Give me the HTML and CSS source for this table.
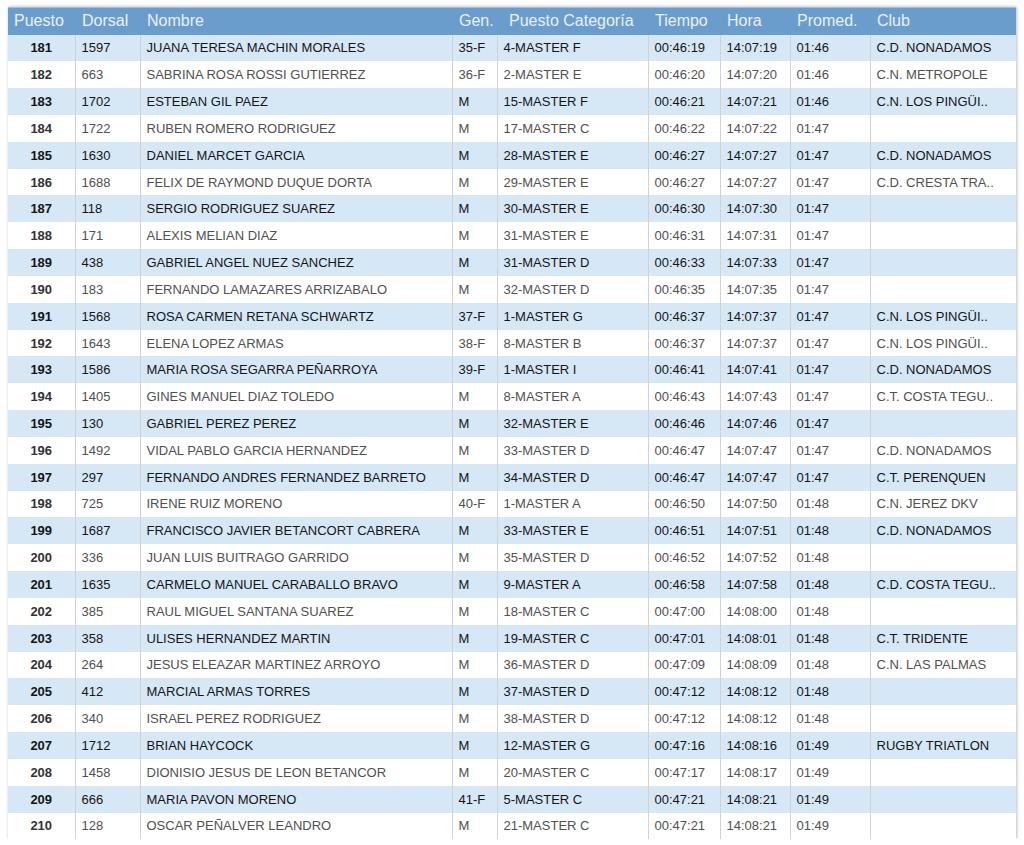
FILE: index.html
```html
<!DOCTYPE html>
<html lang="es">
<head>
<meta charset="utf-8">
<title>Clasificación</title>
<link rel="stylesheet" href="styles.css">
</head>
<body>
<table class="results">
<colgroup>
<col class="c-pos"><col class="c-dor"><col class="c-nom"><col class="c-gen"><col class="c-cat"><col class="c-tie"><col class="c-hor"><col class="c-pro"><col class="c-club">
</colgroup>
<thead>
<tr><th class="h-pos">Puesto</th><th>Dorsal</th><th>Nombre</th><th>Gen.</th><th class="h-cat">Puesto Categoría</th><th>Tiempo</th><th>Hora</th><th>Promed.</th><th>Club</th></tr>
</thead>
<tbody>
<tr><td class="pos">181</td><td>1597</td><td>JUANA TERESA MACHIN MORALES</td><td>35-F</td><td>4-MASTER F</td><td>00:46:19</td><td>14:07:19</td><td>01:46</td><td>C.D. NONADAMOS</td></tr>
<tr><td class="pos">182</td><td>663</td><td>SABRINA ROSA ROSSI GUTIERREZ</td><td>36-F</td><td>2-MASTER E</td><td>00:46:20</td><td>14:07:20</td><td>01:46</td><td>C.N. METROPOLE</td></tr>
<tr><td class="pos">183</td><td>1702</td><td>ESTEBAN GIL PAEZ</td><td>M</td><td>15-MASTER F</td><td>00:46:21</td><td>14:07:21</td><td>01:46</td><td>C.N. LOS PINGÜI..</td></tr>
<tr><td class="pos">184</td><td>1722</td><td>RUBEN ROMERO RODRIGUEZ</td><td>M</td><td>17-MASTER C</td><td>00:46:22</td><td>14:07:22</td><td>01:47</td><td></td></tr>
<tr><td class="pos">185</td><td>1630</td><td>DANIEL MARCET GARCIA</td><td>M</td><td>28-MASTER E</td><td>00:46:27</td><td>14:07:27</td><td>01:47</td><td>C.D. NONADAMOS</td></tr>
<tr><td class="pos">186</td><td>1688</td><td>FELIX DE RAYMOND DUQUE DORTA</td><td>M</td><td>29-MASTER E</td><td>00:46:27</td><td>14:07:27</td><td>01:47</td><td>C.D. CRESTA TRA..</td></tr>
<tr><td class="pos">187</td><td>118</td><td>SERGIO RODRIGUEZ SUAREZ</td><td>M</td><td>30-MASTER E</td><td>00:46:30</td><td>14:07:30</td><td>01:47</td><td></td></tr>
<tr><td class="pos">188</td><td>171</td><td>ALEXIS MELIAN DIAZ</td><td>M</td><td>31-MASTER E</td><td>00:46:31</td><td>14:07:31</td><td>01:47</td><td></td></tr>
<tr><td class="pos">189</td><td>438</td><td>GABRIEL ANGEL NUEZ SANCHEZ</td><td>M</td><td>31-MASTER D</td><td>00:46:33</td><td>14:07:33</td><td>01:47</td><td></td></tr>
<tr><td class="pos">190</td><td>183</td><td>FERNANDO LAMAZARES ARRIZABALO</td><td>M</td><td>32-MASTER D</td><td>00:46:35</td><td>14:07:35</td><td>01:47</td><td></td></tr>
<tr><td class="pos">191</td><td>1568</td><td>ROSA CARMEN RETANA SCHWARTZ</td><td>37-F</td><td>1-MASTER G</td><td>00:46:37</td><td>14:07:37</td><td>01:47</td><td>C.N. LOS PINGÜI..</td></tr>
<tr><td class="pos">192</td><td>1643</td><td>ELENA LOPEZ ARMAS</td><td>38-F</td><td>8-MASTER B</td><td>00:46:37</td><td>14:07:37</td><td>01:47</td><td>C.N. LOS PINGÜI..</td></tr>
<tr><td class="pos">193</td><td>1586</td><td>MARIA ROSA SEGARRA PEÑARROYA</td><td>39-F</td><td>1-MASTER I</td><td>00:46:41</td><td>14:07:41</td><td>01:47</td><td>C.D. NONADAMOS</td></tr>
<tr><td class="pos">194</td><td>1405</td><td>GINES MANUEL DIAZ TOLEDO</td><td>M</td><td>8-MASTER A</td><td>00:46:43</td><td>14:07:43</td><td>01:47</td><td>C.T. COSTA TEGU..</td></tr>
<tr><td class="pos">195</td><td>130</td><td>GABRIEL PEREZ PEREZ</td><td>M</td><td>32-MASTER E</td><td>00:46:46</td><td>14:07:46</td><td>01:47</td><td></td></tr>
<tr><td class="pos">196</td><td>1492</td><td>VIDAL PABLO GARCIA HERNANDEZ</td><td>M</td><td>33-MASTER D</td><td>00:46:47</td><td>14:07:47</td><td>01:47</td><td>C.D. NONADAMOS</td></tr>
<tr><td class="pos">197</td><td>297</td><td>FERNANDO ANDRES FERNANDEZ BARRETO</td><td>M</td><td>34-MASTER D</td><td>00:46:47</td><td>14:07:47</td><td>01:47</td><td>C.T. PERENQUEN</td></tr>
<tr><td class="pos">198</td><td>725</td><td>IRENE RUIZ MORENO</td><td>40-F</td><td>1-MASTER A</td><td>00:46:50</td><td>14:07:50</td><td>01:48</td><td>C.N. JEREZ DKV</td></tr>
<tr><td class="pos">199</td><td>1687</td><td>FRANCISCO JAVIER BETANCORT CABRERA</td><td>M</td><td>33-MASTER E</td><td>00:46:51</td><td>14:07:51</td><td>01:48</td><td>C.D. NONADAMOS</td></tr>
<tr><td class="pos">200</td><td>336</td><td>JUAN LUIS BUITRAGO GARRIDO</td><td>M</td><td>35-MASTER D</td><td>00:46:52</td><td>14:07:52</td><td>01:48</td><td></td></tr>
<tr><td class="pos">201</td><td>1635</td><td>CARMELO MANUEL CARABALLO BRAVO</td><td>M</td><td>9-MASTER A</td><td>00:46:58</td><td>14:07:58</td><td>01:48</td><td>C.D. COSTA TEGU..</td></tr>
<tr><td class="pos">202</td><td>385</td><td>RAUL MIGUEL SANTANA SUAREZ</td><td>M</td><td>18-MASTER C</td><td>00:47:00</td><td>14:08:00</td><td>01:48</td><td></td></tr>
<tr><td class="pos">203</td><td>358</td><td>ULISES HERNANDEZ MARTIN</td><td>M</td><td>19-MASTER C</td><td>00:47:01</td><td>14:08:01</td><td>01:48</td><td>C.T. TRIDENTE</td></tr>
<tr><td class="pos">204</td><td>264</td><td>JESUS ELEAZAR MARTINEZ ARROYO</td><td>M</td><td>36-MASTER D</td><td>00:47:09</td><td>14:08:09</td><td>01:48</td><td>C.N. LAS PALMAS</td></tr>
<tr><td class="pos">205</td><td>412</td><td>MARCIAL ARMAS TORRES</td><td>M</td><td>37-MASTER D</td><td>00:47:12</td><td>14:08:12</td><td>01:48</td><td></td></tr>
<tr><td class="pos">206</td><td>340</td><td>ISRAEL PEREZ RODRIGUEZ</td><td>M</td><td>38-MASTER D</td><td>00:47:12</td><td>14:08:12</td><td>01:48</td><td></td></tr>
<tr><td class="pos">207</td><td>1712</td><td>BRIAN HAYCOCK</td><td>M</td><td>12-MASTER G</td><td>00:47:16</td><td>14:08:16</td><td>01:49</td><td>RUGBY TRIATLON</td></tr>
<tr><td class="pos">208</td><td>1458</td><td>DIONISIO JESUS DE LEON BETANCOR</td><td>M</td><td>20-MASTER C</td><td>00:47:17</td><td>14:08:17</td><td>01:49</td><td></td></tr>
<tr><td class="pos">209</td><td>666</td><td>MARIA PAVON MORENO</td><td>41-F</td><td>5-MASTER C</td><td>00:47:21</td><td>14:08:21</td><td>01:49</td><td></td></tr>
<tr><td class="pos">210</td><td>128</td><td>OSCAR PEÑALVER LEANDRO</td><td>M</td><td>21-MASTER C</td><td>00:47:21</td><td>14:08:21</td><td>01:49</td><td></td></tr>
</tbody>
</table>
</body>
</html>
```

FILE: styles.css
```css
html, body {
  margin: 0;
  background: #ffffff;
}
body {
  padding: 7px 0 0 8px;
  font-family: "Liberation Sans", Arial, sans-serif;
}
.results {
  width: 1008px;
  table-layout: fixed;
  border-collapse: collapse;
  font-size: 13px;
  box-shadow: 1px 0 3px rgba(0, 0, 0, 0.22), 0 -1px 3px rgba(0, 0, 0, 0.08);
}
.c-pos { width: 67px; }
.c-dor { width: 65px; }
.c-nom { width: 312px; }
.c-gen { width: 45px; }
.c-cat { width: 151px; }
.c-tie { width: 72px; }
.c-hor { width: 70px; }
.c-pro { width: 80px; }
.c-club { width: 146px; }

.results thead th {
  height: 27px;
  padding: 0 0 1px 7px;
  background: #6b9dcc;
  border-top: 1px solid #9dbfe0;
  color: #e9f1f9;
  font-size: 16px;
  font-weight: normal;
  text-align: left;
  white-space: nowrap;
  overflow: hidden;
  box-sizing: border-box;
}
.results thead th.h-pos {
  padding-left: 6px;
}
.results thead th.h-cat {
  padding-left: 12px;
}
.results tbody td {
  height: 26.83px;
  padding: 0 0 0 6px;
  border-left: 1px solid #cfd3d6;
  color: #505050;
  white-space: nowrap;
  overflow: hidden;
  box-sizing: border-box;
}
.results tbody td:first-child {
  border-left: none;
}
.results tbody tr:nth-child(odd) td {
  background: #d6e8f6;
  color: #151515;
}
.results tbody tr:nth-child(even) td {
  background: #ffffff;
}
.results tbody td.pos {
  padding: 0;
  text-align: center;
  font-weight: bold;
  color: #1e1e1e;
}
.results tbody tr:nth-child(even) td.pos {
  color: #333333;
}
```
